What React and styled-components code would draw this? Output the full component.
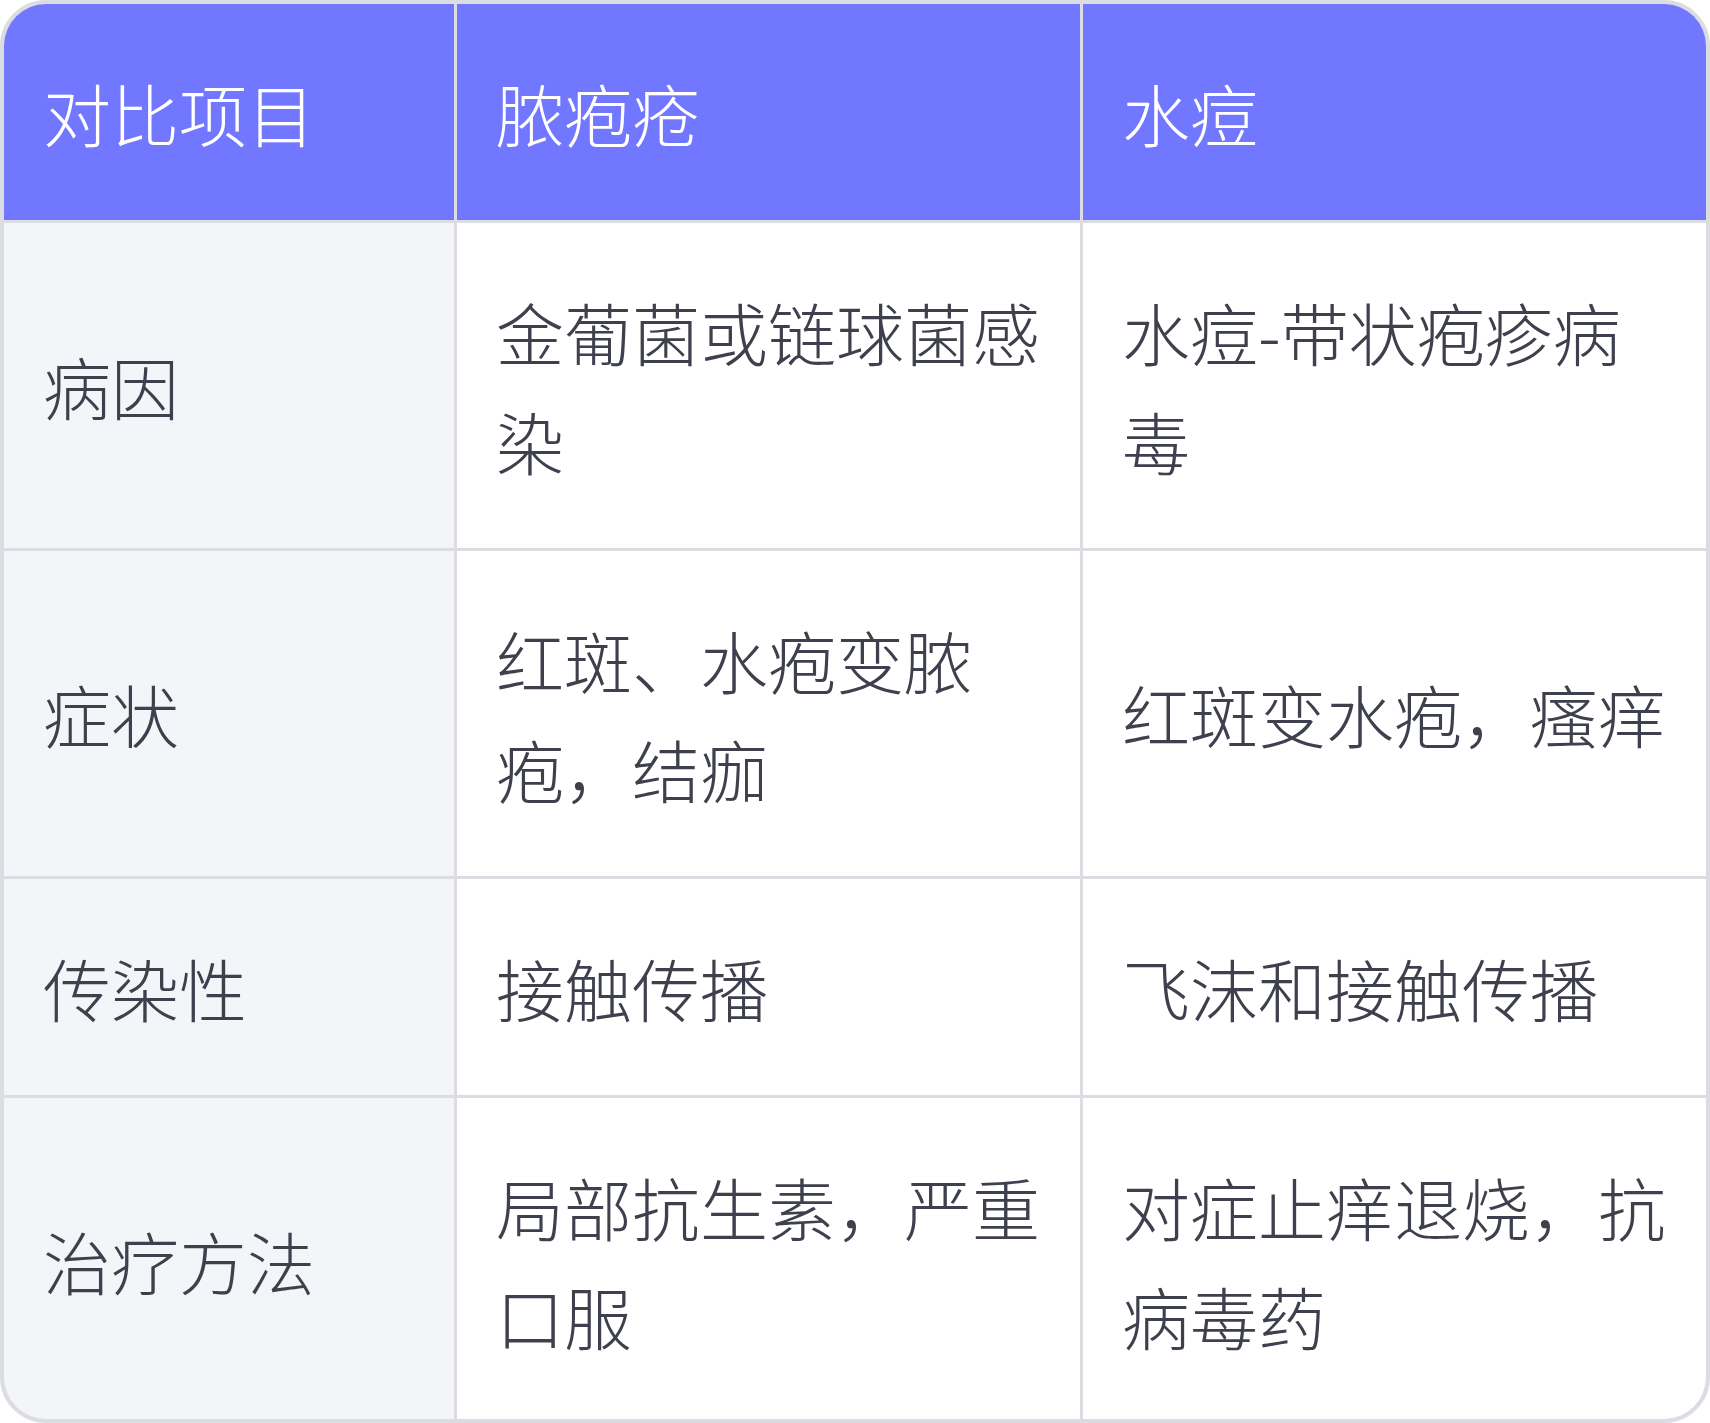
import React from 'react'
import styled, { createGlobalStyle } from 'styled-components'

//STYLE
const GlobalStyle = createGlobalStyle`
  html, body {
    margin: 0;
    padding: 0;
    background: #ffffff;
  }
  body {
    font-family: "Noto Sans CJK SC", "Noto Sans", sans-serif;
  }
`

const lineColor = "#dcdde3"

const TableOuter = styled.div`
  box-sizing: border-box;
  width: 1710px;
  height: 1423px;
  border: 4px solid ${lineColor};
  border-radius: 46px;
  overflow: hidden;
  display: grid;
  grid-template-columns: 450px 1fr 1fr;
  grid-auto-rows: auto;
  gap: 3px;
  background: ${lineColor};
`

const Cell = styled.div`
  display: flex;
  align-items: center;
  padding: 53.5px 36px 53.5px 39px;
  font-size: 68px;
  line-height: 109px;
  font-weight: 300;
  color: ${p => (p.$head ? "#ffffff" : "#3e404d")};
  background: ${p => (p.$head ? "#7177ff" : p.$first ? "#f4f5f9" : "#ffffff")};
  word-break: break-all;
`

const rows = [
  ["病因", "金葡菌或链球菌感染", "水痘-带状疱疹病毒"],
  ["症状", "红斑、水疱变脓疱，结痂", "红斑变水疱，瘙痒"],
  ["传染性", "接触传播", "飞沫和接触传播"],
  ["治疗方法", "局部抗生素，严重口服", "对症止痒退烧，抗病毒药"],
]

//MAIN COMPONENT
const App = () => {
  return (
    <>
      <GlobalStyle />
      <TableOuter>
        <Cell $head>对比项目</Cell>
        <Cell $head>脓疱疮</Cell>
        <Cell $head>水痘</Cell>
        {rows.map((row) =>
          row.map((text, i) => (
            <Cell key={row[0] + i} $first={i === 0}>{text}</Cell>
          ))
        )}
      </TableOuter>
    </>
  )
}
export default App
